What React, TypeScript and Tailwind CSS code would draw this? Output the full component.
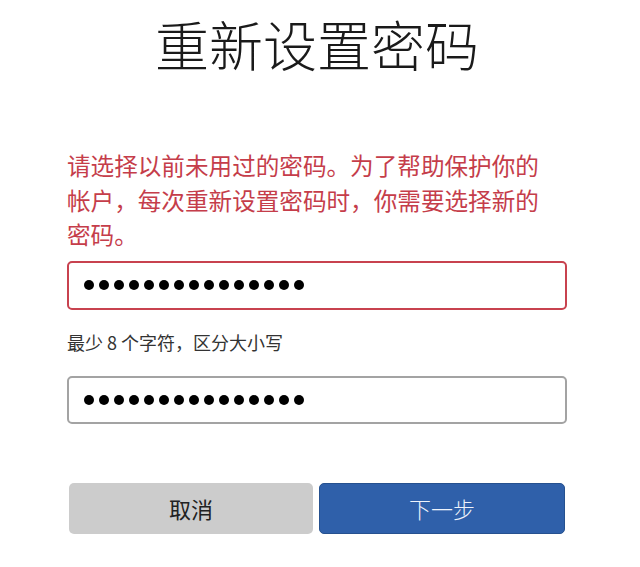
import React from 'react'

const font = { fontFamily: '"Noto Sans CJK SC", "Noto Sans", sans-serif' }

function Dots({ count }: { count: number }) {
  return (
    <div className="flex items-center gap-[5px]">
      {Array.from({ length: count }).map((_, i) => (
        <span key={i} className="block size-[10px] rounded-full bg-black" />
      ))}
    </div>
  )
}

export default function App() {
  return (
    <div className="min-h-[567px] w-[640px] bg-white" style={font}>
      <div className="mx-[67px] flex w-[500px] flex-col pt-3">
        <h1 className="text-center text-[54px] leading-[64px] font-extralight text-[#1a1a1a]">
          重新设置密码
        </h1>

        <p className="mt-[72px] text-[23.6px] leading-[34.5px] text-[#c53d4a]">
          请选择以前未用过的密码。为了帮助保护你的
          <br />
          帐户，每次重新设置密码时，你需要选择新的
          <br />
          密码。
        </p>

        <div className="mt-[9px] flex h-[49px] items-center rounded-[5px] border-2 border-[#c8424f] pl-[15px]">
          <Dots count={15} />
        </div>

        <div className="mt-[20px] text-[18px] leading-6 text-[#333]">
          最少 8 个字符，区分大小写
        </div>

        <div className="mt-[22px] flex h-[48px] items-center rounded-[5px] border-2 border-[#a3a3a3] pl-[15px]">
          <Dots count={15} />
        </div>

        <div className="mt-[59px] flex gap-[6px] px-[2px]">
          <button className="flex h-[51px] flex-1 items-center justify-center rounded-[5px] bg-[#cccccc] text-[22px] text-[#222]">
            取消
          </button>
          <button className="flex h-[51px] flex-1 items-center justify-center rounded-[5px] border border-[#26518f] bg-[#2f60aa] text-[22px] font-light text-[#eef3fb]">
            下一步
          </button>
        </div>
      </div>
    </div>
  )
}
